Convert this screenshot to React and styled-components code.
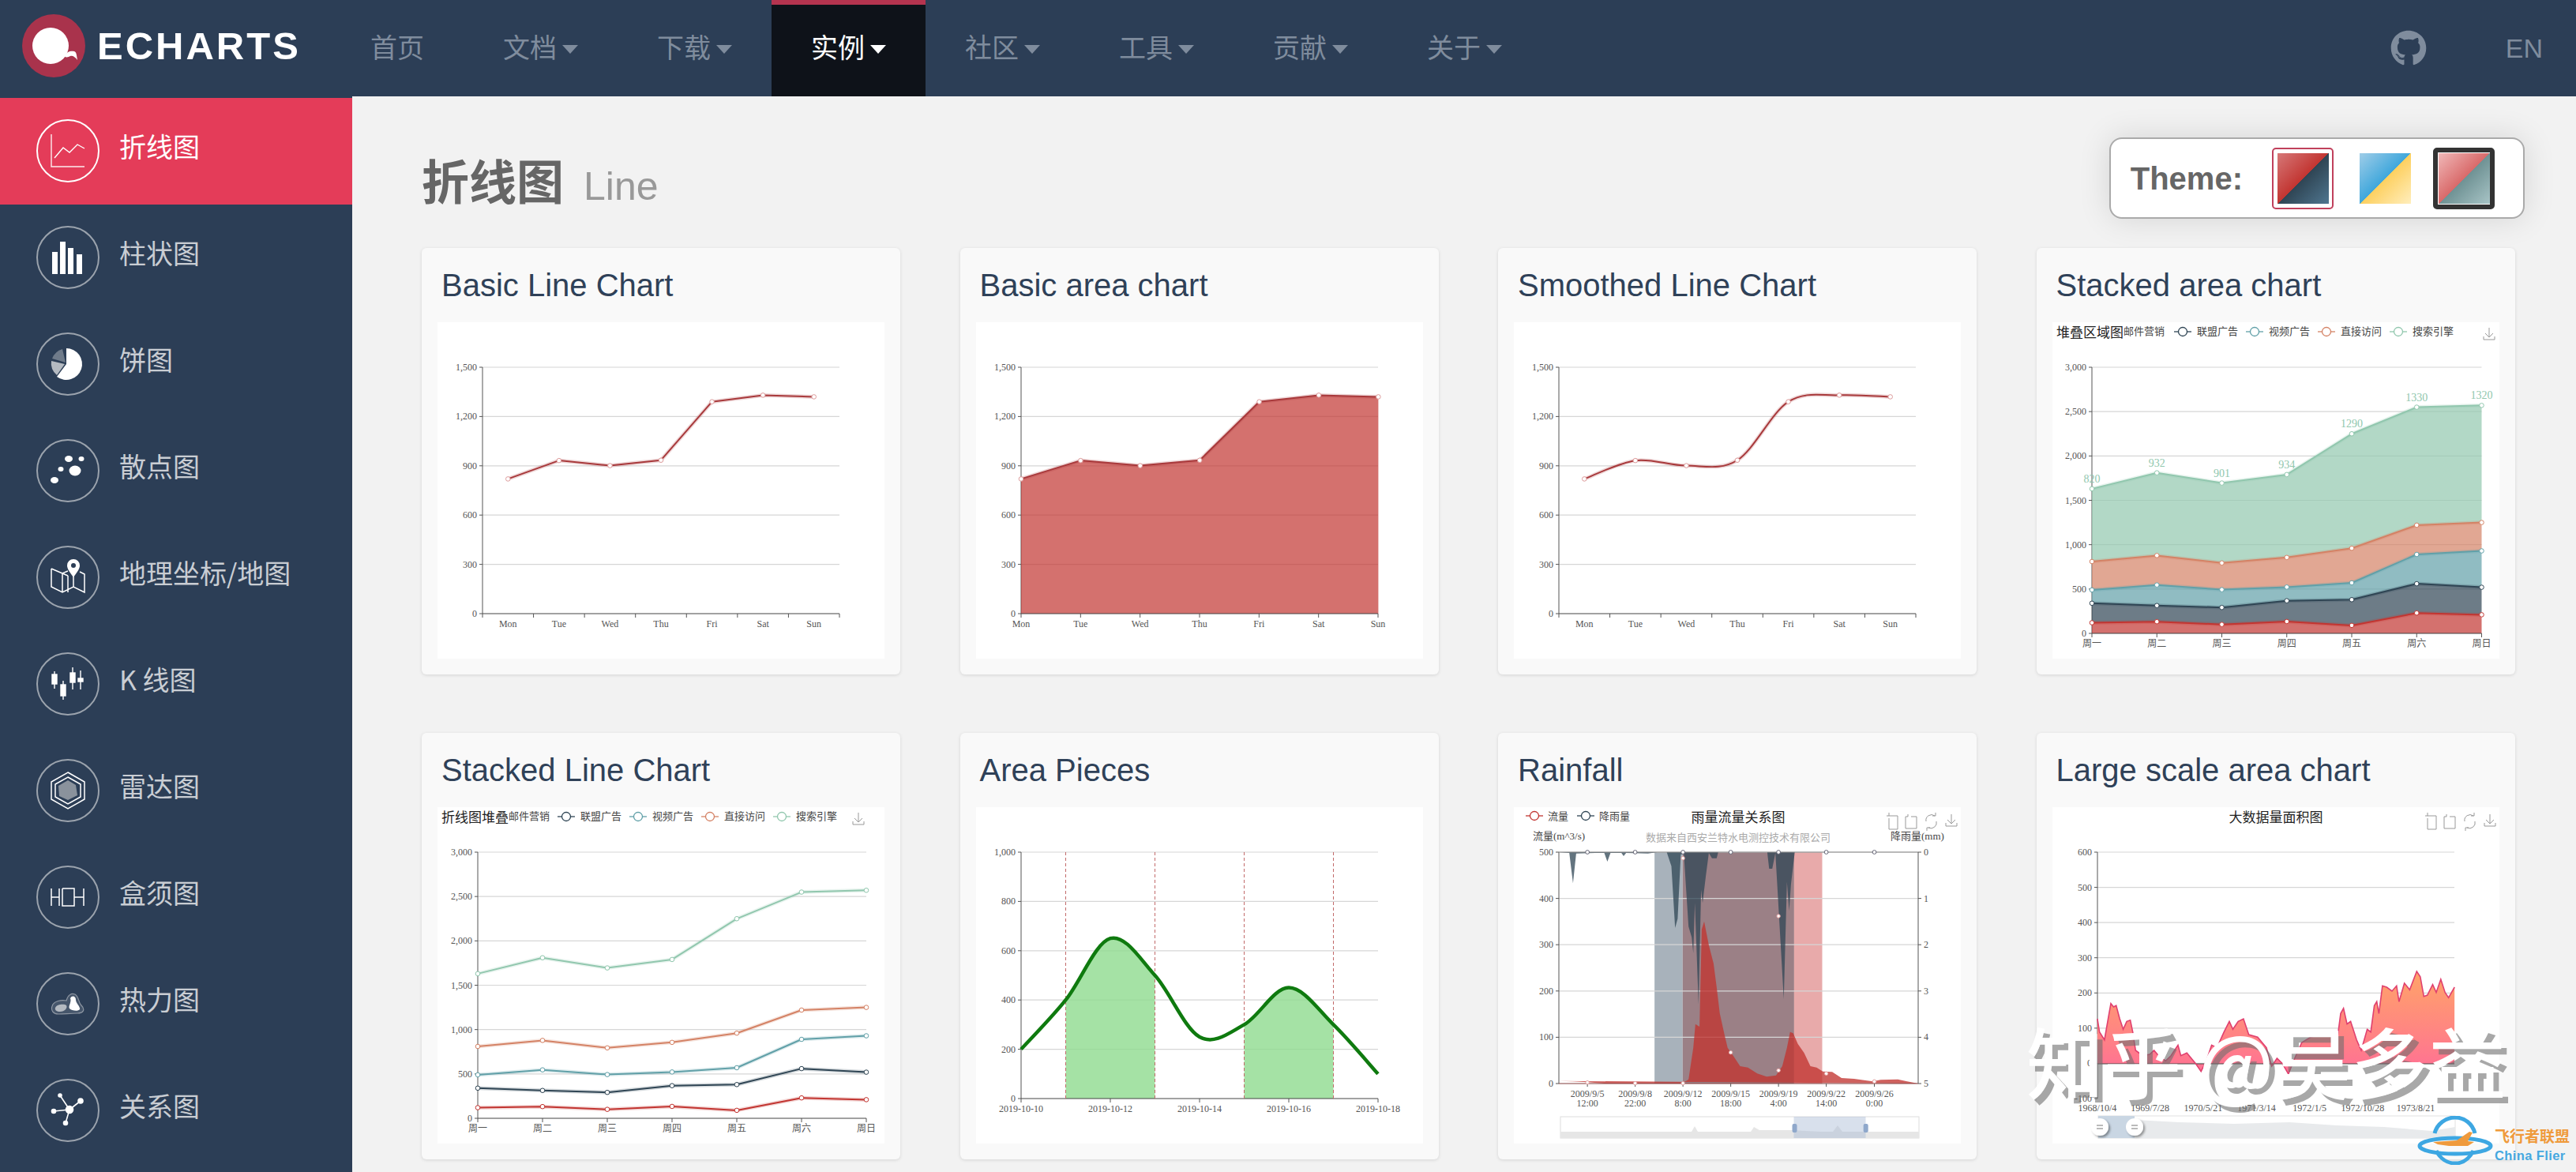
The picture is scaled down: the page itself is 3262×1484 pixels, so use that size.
import styled, { createGlobalStyle } from "styled-components";
import { FaGithub } from "react-icons/fa";

const GlobalStyle = createGlobalStyle`
  html, body {
    margin: 0;
    padding: 0;
    height: 100%;
    overflow: hidden;
    background: #f2f2f2;
    font-family: "Liberation Sans", "Noto Sans CJK SC", sans-serif;
  }
`;

const Page = styled.div`
  position: relative;
  width: 3262px;
  height: 1484px;
  overflow: hidden;
  display: flex;
  flex-direction: column;
`;

const Nav = styled.nav`
  height: 122px;
  flex: none;
  display: flex;
  align-items: stretch;
  background: #2c3e56;
  color: #7f8c9d;
`;

const Logo = styled.div`
  width: 419px;
  flex: none;
  display: flex;
  align-items: center;
  gap: 15px;
  padding: 0 0 6px 28px;
  box-sizing: border-box;
`;

const LogoText = styled.span`
  font: bold 49px "Liberation Sans", sans-serif;
  letter-spacing: 3px;
  color: #fff;
`;

const NavItem = styled.div`
  display: flex;
  align-items: center;
  gap: 7px;
  padding: 0 50px 12px;
  font: 34px "Noto Sans CJK SC", sans-serif;
  border-top: 6px solid ${(p) => (p.$active ? "#b5344f" : "transparent")};
  box-sizing: border-box;
  background: ${(p) => (p.$active ? "#0e1219" : "transparent")};
  color: ${(p) => (p.$active ? "#fff" : "inherit")};
`;

const Caret = styled.i`
  width: 0;
  height: 0;
  margin-top: 8px;
  border-left: 10px solid transparent;
  border-right: 10px solid transparent;
  border-top: 11px solid currentColor;
`;

const NavRight = styled.div`
  margin-left: auto;
  display: flex;
  align-items: center;
  gap: 100px;
  padding-right: 42px;
  font-size: 34px;
`;

const Body = styled.div`
  flex: 1;
  min-height: 0;
  display: flex;
`;

const Sidebar = styled.aside`
  width: 446px;
  flex: none;
  padding-top: 2px;
  background: #2c3e56;
`;

const SideItem = styled.div`
  height: 135px;
  display: flex;
  align-items: center;
  gap: 25px;
  padding: 0 0 1px 46px;
  box-sizing: border-box;
  font: 34px "Noto Sans CJK SC", sans-serif;
  background: ${(p) => (p.$active ? "#e43c59" : "transparent")};
  color: ${(p) => (p.$active ? "#fff" : "#c9cdd3")};
`;

const SideLabel = styled.span`
  padding-bottom: 14px;
`;

const SideIcon = styled.span`
  width: 80px;
  height: 80px;
  flex: none;
  box-sizing: border-box;
  border: 2px solid ${(p) => (p.$active ? "#fff" : "#9ba3ad")};
  border-radius: 50%;
  svg {
    display: block;
    margin: -2px;
  }
`;

const Main = styled.main`
  flex: 1;
  min-width: 0;
  padding: 52px 65px 0 88px;
`;

const Header = styled.header`
  height: 103px;
  margin-bottom: 37px;
  display: flex;
  align-items: center;
  justify-content: space-between;
`;

const Heading = styled.h1`
  margin: 2px 0 0;
  font: bold 60px "Liberation Sans", "Noto Sans CJK SC", sans-serif;
  color: #666;
`;

const HeadingSub = styled.small`
  margin-left: 25px;
  font-size: 50px;
  font-weight: normal;
  color: #999;
`;

const ThemeBox = styled.div`
  display: flex;
  align-items: center;
  height: 103px;
  box-sizing: border-box;
  padding: 0 36px 0 25px;
  background: #fff;
  border: 2px solid #aaa;
  border-radius: 16px;
  box-shadow: 0 0 40px rgba(0, 0, 0, 0.12);
`;

const ThemeLabel = styled.span`
  margin-right: 37px;
  padding-top: 2px;
  font-weight: bold;
  font-size: 40px;
  color: #666;
`;

const SwatchFrame = styled.div`
  width: 78px;
  height: 78px;
  box-sizing: border-box;
  display: flex;
  align-items: center;
  justify-content: center;
  margin-right: ${(p) => p.$gap || 0}px;
  border-radius: 5px;
  border: ${(p) => p.$border};
`;

const Swatch = styled.div`
  width: 65px;
  height: 64px;
  flex: none;
  background: linear-gradient(
    to bottom right,
    ${(p) => p.$a},
    ${(p) => p.$b} 50%,
    ${(p) => p.$c} 50%,
    ${(p) => p.$d}
  );
`;

const Grid = styled.section`
  display: grid;
  grid-template-columns: repeat(4, 606px);
  column-gap: 75.5px;
  row-gap: 74px;
`;

const Card = styled.article`
  height: 540px;
  box-sizing: border-box;
  padding: 0 20px;
  background: #f9f9f9;
  border-radius: 6px;
  box-shadow: 0 1px 4px rgba(0, 0, 0, 0.12);
`;

const CardTitle = styled.h2`
  height: 94px;
  margin: 0;
  padding-left: 5px;
  font-size: 40px;
  font-weight: normal;
  line-height: 94px;
  color: #2f4158;
  white-space: nowrap;
`;

const Chart = styled.svg`
  display: block;
  width: 566px;
  height: 426px;
  background: #fff;
  text {
    font-family: "Liberation Serif", "Noto Sans CJK SC", serif;
    font-size: 12px;
    fill: #555;
  }
  text.title {
    font-size: 17px;
    fill: #222;
  }
  text.legend {
    font-size: 13px;
    fill: #444;
  }
  text.sub {
    font-size: 13px;
    fill: #aaa;
  }
  text.value {
    font-size: 14px;
    fill: #91c7ae;
  }
`;

const Watermark = styled.div`
  position: absolute;
  left: 2566px;
  top: 1270px;
  font: 500 98px "Noto Sans CJK SC", sans-serif;
  color: #fff;
  white-space: nowrap;
  text-shadow: 7px 7px 0 rgba(110, 110, 110, 0.6);
`;

const FlierBadge = styled.div`
  position: absolute;
  left: 3061px;
  top: 1413px;
  display: flex;
  align-items: center;
  gap: 2px;
`;

const FlierText = styled.div`
  display: flex;
  flex-direction: column;
  line-height: 1;
  padding-top: 8px;
`;

const FlierCn = styled.span`
  font: bold 19px "Noto Sans CJK SC", sans-serif;
  color: #ef9a3c;
`;

const FlierEn = styled.span`
  margin-top: 3px;
  font: bold 16.5px "Liberation Sans", sans-serif;
  letter-spacing: 0.4px;
  color: #45a8e0;
`;

const RED = "#c23531";
const SERIES = ["#c23531", "#2f4554", "#61a0a8", "#d48265", "#91c7ae"];
const DAYS = ["Mon", "Tue", "Wed", "Thu", "Fri", "Sat", "Sun"];
const WEEK = ["周一", "周二", "周三", "周四", "周五", "周六", "周日"];
const SALES = [820, 932, 901, 934, 1290, 1330, 1320];
const STACK = [
  [120, 132, 101, 134, 90, 230, 210],
  [220, 182, 191, 234, 290, 330, 310],
  [150, 232, 201, 154, 190, 330, 410],
  [320, 332, 301, 334, 390, 330, 320],
  [820, 932, 901, 934, 1290, 1330, 1320],
];
const LEGEND = ["联盟广告", "视频广告", "直接访问", "搜索引擎"];

const linePath = (pts) => pts.map((p, i) => `${i ? "L" : "M"}${p[0].toFixed(1)} ${p[1].toFixed(1)}`).join(" ");

const smoothPath = (pts) => {
  let d = `M${pts[0][0]} ${pts[0][1]}`;
  for (let i = 0; i < pts.length - 1; i++) {
    const p0 = pts[i - 1] || pts[i];
    const p1 = pts[i];
    const p2 = pts[i + 1];
    const p3 = pts[i + 2] || p2;
    d += ` C${p1[0] + (p2[0] - p0[0]) / 6} ${p1[1] + (p2[1] - p0[1]) / 6} ${p2[0] - (p3[0] - p1[0]) / 6} ${p2[1] - (p3[1] - p1[1]) / 6} ${p2[0]} ${p2[1]}`;
  }
  return d;
};

function YAxis({ x0, x1, top, bottom, labels }) {
  const step = (bottom - top) / (labels.length - 1);
  return (
    <g>
      {labels.map((l, i) => {
        const y = bottom - i * step;
        return (
          <g key={l}>
            {i > 0 && <line x1={x0} x2={x1} y1={y} y2={y} stroke="#d6d6d6" strokeWidth="1.2" />}
            <line x1={x0 - 4} x2={x0} y1={y} y2={y} stroke="#555" />
            <text x={x0 - 7} y={y + 4} textAnchor="end">{l}</text>
          </g>
        );
      })}
      <line x1={x0} x2={x0} y1={top} y2={bottom} stroke="#555" />
    </g>
  );
}

function XAxis({ x0, x1, y, labels, band }) {
  const n = labels.length;
  const step = (x1 - x0) / (band ? n : n - 1);
  return (
    <g>
      <line x1={x0} x2={x1} y1={y} y2={y} stroke="#444" />
      {Array.from({ length: band ? n + 1 : n }, (_, i) => (
        <line key={i} x1={x0 + i * step} x2={x0 + i * step} y1={y} y2={y + 5} stroke="#555" />
      ))}
      {labels.map((l, i) => (
        <text key={l} x={x0 + (band ? i + 0.5 : i) * step} y={y + 17} textAnchor="middle">{l}</text>
      ))}
    </g>
  );
}

function Dots({ pts, color }) {
  return pts.map((p, i) => <circle key={i} cx={p[0]} cy={p[1]} r="2.8" fill="#fff" stroke={color} strokeWidth="1" />);
}

function Stroke({ d, color, width = 2 }) {
  return (
    <g fill="none" strokeLinejoin="round">
      <path d={d} stroke={color} strokeWidth={width + 3} opacity="0.2" />
      <path d={d} stroke={color} strokeWidth={width} />
    </g>
  );
}

function LegendMark({ x, y, color }) {
  return (
    <g fill="none" stroke={color} strokeWidth="1.3">
      <line x1={x} x2={x + 22} y1={y} y2={y} />
      <circle cx={x + 11} cy={y} r="5.5" fill="#fff" />
    </g>
  );
}

function DownloadIcon({ x, y }) {
  return (
    <path
      transform={`translate(${x} ${y})`}
      d="M7 0V11M2 7L7 12L12 7M0 11V15H14V11"
      fill="none"
      stroke="#999"
      strokeWidth="1"
    />
  );
}

function Toolbox() {
  return (
    <g fill="none" stroke="#999" strokeWidth="1">
      <path d="M472 11H486V28H475V14M475 7V11" />
      <path d="M499 9V12H496V27H510V12H503" />
      <path d="M533 11A7 7 0 0 0 522 18M525 26A7 7 0 0 0 535 18M530 11H534V7M527 26H523V30" />
      <DownloadIcon x={547} y={9} />
    </g>
  );
}

function StackHeader({ title, markX, iconX }) {
  return (
    <g>
      <text className="title" x="5" y="19">{title}</text>
      <text className="legend" x="90" y="16">邮件营销</text>
      {LEGEND.map((name, i) => (
        <g key={name}>
          <LegendMark x={markX + i * 91} y={12} color={SERIES[i + 1]} />
          <text className="legend" x={markX + 29 + i * 91} y="16">{name}</text>
        </g>
      ))}
      <DownloadIcon x={iconX} y={7} />
    </g>
  );
}

const bandPts = SALES.map((v, i) => [57 + (i + 0.5) * 64.57, 369 - (v * 312) / 1500]);
const SALES_LABELS = ["0", "300", "600", "900", "1,200", "1,500"];

function BasicLine() {
  return (
    <Chart viewBox="0 0 566 426">
      <YAxis x0={57} x1={509} top={57} bottom={369} labels={SALES_LABELS} />
      <XAxis x0={57} x1={509} y={369} labels={DAYS} band />
      <Stroke d={linePath(bandPts)} color="#a8393b" />
      <Dots pts={bandPts} color="#dd9a9a" />
    </Chart>
  );
}

function BasicArea() {
  const pts = SALES.map((v, i) => [57 + i * 75.4, 369 - (v * 312) / 1500]);
  return (
    <Chart viewBox="0 0 566 426">
      <YAxis x0={57} x1={509} top={57} bottom={369} labels={SALES_LABELS} />
      <path d={`${linePath(pts)} L509.4 369 L57 369Z`} fill={RED} opacity="0.7" />
      <XAxis x0={57} x1={509} y={369} labels={DAYS} />
      <Stroke d={linePath(pts)} color="#a8393b" />
      <Dots pts={pts} color="#dd9a9a" />
    </Chart>
  );
}

function SmoothLine() {
  return (
    <Chart viewBox="0 0 566 426">
      <YAxis x0={57} x1={509} top={57} bottom={369} labels={SALES_LABELS} />
      <XAxis x0={57} x1={509} y={369} labels={DAYS} band />
      <Stroke d={smoothPath(bandPts)} color="#a8393b" />
      <Dots pts={bandPts} color="#dd9a9a" />
    </Chart>
  );
}

const stackedPts = (x0, step) => {
  const totals = [0, 0, 0, 0, 0, 0, 0];
  return STACK.map((s) =>
    s.map((v, i) => {
      totals[i] += v;
      return [x0 + i * step, 394 - (totals[i] * 337) / 3000];
    })
  );
};

const STACK_LABELS = ["0", "500", "1,000", "1,500", "2,000", "2,500", "3,000"];

function StackedArea() {
  const rows = stackedPts(50, 82.25);
  return (
    <Chart viewBox="0 0 566 426">
      <StackHeader title="堆叠区域图" markX={154} iconX={546} />
      <YAxis x0={50} x1={543.5} top={57} bottom={394} labels={STACK_LABELS} />
      {rows.map((pts, n) => {
        const below = n ? rows[n - 1].slice().reverse() : [[543.5, 394], [50, 394]];
        return <path key={n} d={`${linePath(pts.concat(below))}Z`} fill={SERIES[n]} opacity="0.7" />;
      })}
      <XAxis x0={50} x1={543.5} y={394} labels={WEEK} />
      {rows.map((pts, n) => (
        <g key={n}>
          <Stroke d={linePath(pts)} color={SERIES[n]} />
          <Dots pts={pts} color={SERIES[n]} />
        </g>
      ))}
      {rows[4].map((p, i) => (
        <text key={i} className="value" x={p[0]} y={p[1] - 8} textAnchor="middle">{SALES[i]}</text>
      ))}
    </Chart>
  );
}

function StackedLine() {
  const rows = stackedPts(51, 82);
  return (
    <Chart viewBox="0 0 566 426">
      <StackHeader title="折线图堆叠" markX={152} iconX={526} />
      <YAxis x0={51} x1={543} top={57} bottom={394} labels={STACK_LABELS} />
      <XAxis x0={51} x1={543} y={394} labels={WEEK} />
      {rows.map((pts, n) => (
        <g key={n}>
          <Stroke d={linePath(pts)} color={SERIES[n]} />
          <Dots pts={pts} color={SERIES[n]} />
        </g>
      ))}
    </Chart>
  );
}

function AreaPieces() {
  const x = (d) => 57 + d * 56.5;
  const y = (v) => 369 - v * 0.312;
  const pts = [200, 400, 650, 500, 250, 300, 450, 300, 100].map((v, i) => [x(i), y(v)]);
  const d = smoothPath(pts);
  return (
    <Chart viewBox="0 0 566 426">
      <defs>
        <clipPath id="pieces">
          <rect x={x(1)} y="57" width={x(3) - x(1)} height="312" />
          <rect x={x(5)} y="57" width={x(7) - x(5)} height="312" />
        </clipPath>
      </defs>
      <YAxis x0={57} x1={509} top={57} bottom={369} labels={["0", "200", "400", "600", "800", "1,000"]} />
      <path d={`${d} L509 369 L57 369Z`} fill="#8fdb8f" opacity="0.8" clipPath="url(#pieces)" />
      <XAxis x0={57} x1={509} y={369} labels={["2019-10-10", "2019-10-12", "2019-10-14", "2019-10-16", "2019-10-18"]} />
      {[1, 3, 5, 7].map((n) => (
        <line key={n} x1={x(n)} x2={x(n)} y1="57" y2="369" stroke="#c26a6a" strokeDasharray="4 3" />
      ))}
      <path d={d} fill="none" stroke="#0f7a0f" strokeWidth="4.5" />
    </Chart>
  );
}

// traced outlines, x/y as read off the enlarged reference crop
const FLOW = [[185,1076],[230,1078],[276,1081],[330,1086],[430,1086],[580,1086],[600,1070],[615,950],[622,860],[635,870],[642,500],[650,470],[665,560],[680,630],[690,720],[700,820],[715,900],[725,950],[740,975],[765,1020],[790,1025],[820,1048],[850,1060],[880,1055],[900,1020],[915,950],[925,890],[935,895],[950,935],[970,970],[990,1020],[1010,1025],[1030,1040],[1060,1042],[1090,1065],[1130,1068],[1190,1078],[1215,1072],[1270,1070],[1300,1078],[1335,1086]];
const RAIN = [[185,207],[218,210],[230,325],[240,212],[300,210],[330,210],[340,243],[350,210],[385,210],[392,222],[400,210],[470,212],[500,207],[530,207],[545,260],[557,495],[565,460],[575,215],[585,215],[600,490],[610,530],[615,590],[620,400],[632,785],[640,350],[645,400],[655,300],[665,210],[675,230],[690,230],[695,207],[852,207],[858,270],[868,270],[878,210],[885,350],[905,765],[915,320],[922,430],[928,330],[940,207],[1335,207]];
const rainPt = (p) => [p[0] / 2.529 - 16, p[1] / 3 - 12];
const rx = (v) => v / 2.529 - 16;
const RAIN_TICKS = [["2009/9/5", "12:00", 276], ["2009/9/8", "22:00", 429], ["2009/9/12", "8:00", 582], ["2009/9/15", "18:00", 735], ["2009/9/19", "4:00", 888], ["2009/9/22", "14:00", 1041], ["2009/9/26", "0:00", 1195]];

function Rainfall() {
  return (
    <Chart viewBox="0 0 566 426">
      <LegendMark x={15} y={11} color="#c23531" />
      <text className="legend" x="43" y="16">流量</text>
      <LegendMark x={80} y={11} color="#2f4554" />
      <text className="legend" x="108" y="16">降雨量</text>
      <text className="title" x="284" y="19" textAnchor="middle">雨量流量关系图</text>
      <text className="sub" x="284" y="43" textAnchor="middle">数据来自西安兰特水电测控技术有限公司</text>
      <text className="legend" x="24" y="41">流量(m^3/s)</text>
      <text className="legend" x="477" y="41">降雨量(mm)</text>
      <Toolbox />
      <rect x={rx(491)} y="57" width={rx(581) - rx(491)} height="293" fill="#a8b2bb" />
      <rect x={rx(581)} y="57" width={rx(938) - rx(581)} height="293" fill="#9b8086" />
      <rect x={rx(938)} y="57" width={rx(1028) - rx(938)} height="293" fill="#e8aaaa" />
      <YAxis x0={57} x1={512} top={57} bottom={350} labels={["0", "100", "200", "300", "400", "500"]} />
      <path d={`${linePath(FLOW.map(rainPt))}Z`} fill={RED} opacity="0.78" />
      <path d={`${linePath(RAIN.map(rainPt))}Z`} fill="#2f4554" opacity="0.75" />
      <line x1="57" x2="512" y1="57" y2="57" stroke="#888" />
      <line x1="57" x2="512" y1="350" y2="350" stroke="#803c3c" />
      <line x1="512" x2="512" y1="57" y2="350" stroke="#555" />
      {["0", "1", "2", "3", "4", "5"].map((l, i) => (
        <g key={l}>
          <line x1="512" x2="516" y1={57 + i * 58.6} y2={57 + i * 58.6} stroke="#555" />
          <text x="519" y={61 + i * 58.6}>{l}</text>
        </g>
      ))}
      {RAIN_TICKS.map(([a, b, v]) => (
        <g key={a}>
          <line x1={rx(v)} x2={rx(v)} y1="350" y2="354" stroke="#555" />
          <text x={rx(v)} y="367" textAnchor="middle">{a}</text>
          <text x={rx(v)} y="379" textAnchor="middle">{b}</text>
          <circle cx={rx(v)} cy="57" r="2.4" fill="#fff" stroke="#667" />
        </g>
      ))}
      {[[582, 230], [888, 450], [735, 968], [888, 1036], [1041, 1048], [276, 1082], [429, 1085], [582, 1085], [1195, 1078]].map(([a, b]) => (
        <circle key={`${a}-${b}`} cx={rx(a)} cy={b / 3 - 12} r="2.2" fill="#fff" stroke="#e3a0a0" />
      ))}
      <rect x="59" y="392" width="454" height="27" fill="#fff" stroke="#ddd" />
      <path d="M59 411 H225 L229 404 L233 411 H300 L304 405 L311 409 H350 L390 411 H404 L410 403 L416 411 L513 411 V419 H59Z" fill="#e6e6e6" />
      <rect x={rx(937)} y="392" width="91" height="27" fill="#a9bbd4" opacity="0.45" />
      <rect x={rx(932)} y="401" width="6" height="11" rx="2" fill="#8fa8cb" />
      <rect x={rx(1160)} y="401" width="6" height="11" rx="2" fill="#8fa8cb" />
    </Chart>
  );
}

const BIG = [[212,420],[218,470],[232,500],[245,400],[250,362],[258,375],[265,370],[275,420],[285,460],[295,430],[305,425],[312,470],[320,540],[340,560],[360,555],[372,540],[385,560],[405,580],[420,560],[440,520],[448,560],[465,550],[490,590],[505,620],[520,580],[535,520],[550,530],[570,470],[585,430],[595,460],[610,430],[625,420],[640,480],[665,490],[690,530],[705,600],[720,570],[735,590],[752,630],[770,570],[790,510],[815,490],[840,480],[860,470],[875,470],[892,480],[900,400],[908,380],[918,440],[928,430],[945,500],[958,540],[975,460],[985,470],[995,370],[1002,355],[1008,400],[1018,295],[1030,300],[1045,315],[1058,295],[1065,355],[1080,285],[1095,310],[1115,240],[1125,260],[1135,335],[1145,330],[1160,290],[1170,320],[1183,270],[1195,320],[1205,340],[1222,300]];
const BIG_TICKS = [["1968/10/4", 212], ["1969/7/28", 361], ["1970/5/21", 511], ["1971/3/14", 662], ["1972/1/5", 812], ["1972/10/28", 962], ["1973/8/21", 1112]];
const bigPt = (p) => [p[0] / 2.233 - 38, p[1] / 3 + 128];

function LargeArea() {
  const pts = BIG.map(bigPt);
  return (
    <Chart viewBox="0 0 566 426">
      <defs>
        <linearGradient id="bigFill" x1="0" y1="0" x2="0" y2="1">
          <stop offset="0" stopColor="#ffa468" />
          <stop offset="1" stopColor="#ff6f95" />
        </linearGradient>
        <filter id="knobShadow" x="-50%" y="-50%" width="200%" height="200%">
          <feDropShadow dx="2" dy="2" stdDeviation="1.5" floodOpacity="0.4" />
        </filter>
      </defs>
      <text className="title" x="283" y="19" textAnchor="middle">大数据量面积图</text>
      <Toolbox />
      <YAxis x0={57} x1={509} top={57} bottom={369} labels={["-100", "0", "100", "200", "300", "400", "500", "600"]} />
      <path d={`${linePath(pts)} L509 325 L57 325Z`} fill="url(#bigFill)" />
      <line x1="57" x2="509" y1="325" y2="325" stroke="#444" />
      <path d={linePath(pts)} fill="none" stroke="#e0406f" strokeWidth="1.6" />
      {BIG_TICKS.map(([l, v]) => (
        <text key={l} x={v / 2.233 - 38} y="385" textAnchor="middle">{l}</text>
      ))}
      <rect x="58" y="391" width="452" height="28" fill="#fff" stroke="#e2e2e2" />
      <path d="M60 398 L105 396 L160 399 L230 401 L300 399 L360 403 L420 405 L480 410 L510 405 V419 H60Z" fill="#e8eaec" />
      <rect x="58" y="391" width="46" height="28" fill="#c9d6e3" />
      {[60, 104].map((cx) => (
        <g key={cx}>
          <circle cx={cx} cy="405" r="11" fill="#fff" filter="url(#knobShadow)" />
          <path d={`M${cx - 4} 403H${cx + 4}M${cx - 4} 407H${cx + 4}`} stroke="#777" />
        </g>
      ))}
    </Chart>
  );
}

const CHARTS = [
  ["Basic Line Chart", BasicLine],
  ["Basic area chart", BasicArea],
  ["Smoothed Line Chart", SmoothLine],
  ["Stacked area chart", StackedArea],
  ["Stacked Line Chart", StackedLine],
  ["Area Pieces", AreaPieces],
  ["Rainfall", Rainfall],
  ["Large scale area chart", LargeArea],
];

const iconProps = { width: 80, height: 80, viewBox: "0 0 80 80" };

const SIDE_ITEMS = [
  ["折线图", (
    <svg {...iconProps} fill="none" stroke="#fff" strokeWidth="1.4">
      <path d="M19 19V60H61" opacity="0.9" />
      <path d="M23 49L34 36L42 42L52 32L61 37" />
    </svg>
  )],
  ["柱状图", (
    <svg {...iconProps} fill="#fff">
      <rect x="20" y="33" width="7" height="28" />
      <rect x="30" y="20" width="7" height="41" />
      <rect x="40" y="28" width="7" height="33" />
      <rect x="51" y="36" width="7" height="25" />
    </svg>
  )],
  ["饼图", (
    <svg {...iconProps}>
      <path d="M38 20A20 20 0 1 1 26 56L38 40Z" fill="#fff" />
      <path d="M26 54A20 20 0 0 1 19 36L36 40Z" fill="#b4bac1" />
      <path d="M20 33A20 20 0 0 1 33 21L37 38Z" fill="#6f7b8a" />
    </svg>
  )],
  ["散点图", (
    <svg {...iconProps} fill="#fff">
      <ellipse cx="41" cy="25" rx="5" ry="4" />
      <ellipse cx="57" cy="25" rx="3.5" ry="3" />
      <ellipse cx="49" cy="40" rx="7.5" ry="6.5" />
      <ellipse cx="31" cy="38" rx="3.5" ry="3" />
      <ellipse cx="23" cy="52" rx="5" ry="4" />
    </svg>
  )],
  ["地理坐标/地图", (
    <svg {...iconProps} fill="none" stroke="#fff" strokeWidth="1.5">
      <path d="M40 38V59M19 29L40 38M19 29V52L33 59L47 52L61 59V36L55 33M33 35V59M19 29L33 35L40 32M47 39V52" />
      <path d="M47 40C42 33 39 29 39 25A8 8 0 0 1 55 25C55 29 52 33 47 40Z" fill="#fff" stroke="none" />
      <circle cx="47" cy="25" r="3" fill="#2c3e56" stroke="none" />
    </svg>
  )],
  ["K 线图", (
    <svg {...iconProps} fill="#fff" stroke="#fff" strokeWidth="1.4">
      <path d="M23 24V46M34 36V60M46 19V47M56 23V47" fill="none" />
      <rect x="20" y="28" width="6" height="12" />
      <rect x="31" y="41" width="6" height="14" />
      <rect x="43" y="26" width="6" height="12" />
      <rect x="53" y="33" width="6" height="4" />
    </svg>
  )],
  ["雷达图", (
    <svg {...iconProps} fill="none" stroke="#fff" strokeWidth="1.5">
      <path d="M40 17L61 29V51L40 63L19 51V29Z" />
      <path d="M40 23L56 32V48L40 57L24 48V32Z" />
      <path d="M40 27L50 33L52 46L40 52L29 47L28 34Z" fill="#8a929c" stroke="none" />
    </svg>
  )],
  ["盒须图", (
    <svg {...iconProps} fill="none" stroke="#fff" strokeWidth="1.5">
      <path d="M19 29V51M19 40H29M29 29V51M33 29V51H48V29H33M48 40H60M60 29V51" />
    </svg>
  )],
  ["热力图", (
    <svg {...iconProps}>
      <path d="M20 43C22 36 32 35 38 36C40 29 44 26 49 28C54 31 53 38 57 42C62 47 60 52 52 52C42 52 36 53 28 53C22 53 18 49 20 43Z" fill="#46566b" stroke="#8d96a2" strokeWidth="1.2" />
      <path d="M24 45C26 40 36 40 38 42C40 45 36 50 30 50C26 50 23 48 24 45Z" fill="#b4bac1" />
      <path d="M43 33C45 29 50 30 50 35C50 39 56 44 55 47C53 50 45 49 42 46C40 43 45 38 43 33Z" fill="#fff" />
    </svg>
  )],
  ["关系图", (
    <svg {...iconProps} fill="#fff" stroke="#fff" strokeWidth="1.6">
      <path d="M42 39L30 21M42 39L22 41M42 39L56 28M42 39L37 56" fill="none" />
      <circle cx="42" cy="39" r="4.5" />
      <circle cx="30" cy="21" r="2" />
      <circle cx="22" cy="41" r="2.5" />
      <circle cx="56" cy="28" r="3" />
      <circle cx="37" cy="56" r="2.5" />
    </svg>
  )],
];

function EchartsMark() {
  return (
    <svg width="80" height="80" viewBox="0 0 80 80">
      <circle cx="40" cy="40" r="40" fill="#a9334c" />
      <circle cx="36" cy="40" r="23" fill="#fff" />
      <path d="M54 54C56 47 62 46 66 47C69 48 69 52 70 58C67 54 64 52 61 53C59 54 57 55 54 54Z" fill="#fff" />
    </svg>
  );
}

function FlierMark() {
  return (
    <svg width="96" height="62" viewBox="0 0 96 62" fill="none">
      <path d="M22 22C25 10 36 2 48 2C60 2 70 10 73 22" stroke="#3da7e2" strokeWidth="5" />
      <path d="M24 44C29 54 38 60 48 60C58 60 66 54 71 44" stroke="#3da7e2" strokeWidth="5" />
      <ellipse cx="48" cy="38" rx="45" ry="10" stroke="#3da7e2" strokeWidth="5" />
      <path d="M20 33L50 31L66 20L70 21L64 32L72 33L64 38L40 38L26 36Z" fill="#ef9a3c" />
    </svg>
  );
}

export default function App() {
  return (
    <Page>
      <GlobalStyle />
      <Nav>
        <Logo>
          <EchartsMark />
          <LogoText>ECHARTS</LogoText>
        </Logo>
        <NavItem>首页</NavItem>
        <NavItem>文档<Caret /></NavItem>
        <NavItem>下载<Caret /></NavItem>
        <NavItem $active>实例<Caret /></NavItem>
        <NavItem>社区<Caret /></NavItem>
        <NavItem>工具<Caret /></NavItem>
        <NavItem>贡献<Caret /></NavItem>
        <NavItem>关于<Caret /></NavItem>
        <NavRight>
          <FaGithub size={46} />
          <span>EN</span>
        </NavRight>
      </Nav>
      <Body>
        <Sidebar>
          {SIDE_ITEMS.map(([label, icon], i) => (
            <SideItem key={label} $active={i === 0}>
              <SideIcon $active={i === 0}>{icon}</SideIcon>
              <SideLabel>{label}</SideLabel>
            </SideItem>
          ))}
        </Sidebar>
        <Main>
          <Header>
            <Heading>
              折线图
              <HeadingSub>Line</HeadingSub>
            </Heading>
            <ThemeBox>
              <ThemeLabel>Theme:</ThemeLabel>
              <SwatchFrame $border="2px solid #c0405c" $gap={26}>
                <Swatch $a="#d67878" $b="#c23531" $c="#2f4554" $d="#4f7690" />
              </SwatchFrame>
              <SwatchFrame $border="2px solid transparent" $gap={22}>
                <Swatch $a="#9fcde8" $b="#3fa7dc" $c="#fdd060" $d="#ffeebd" />
              </SwatchFrame>
              <SwatchFrame $border="6px solid #333">
                <Swatch $a="#f0b8b8" $b="#d96a6a" $c="#6f9294" $d="#a8c4c6" />
              </SwatchFrame>
            </ThemeBox>
          </Header>
          <Grid>
            {CHARTS.map(([title, ChartBody]) => (
              <Card key={title}>
                <CardTitle>{title}</CardTitle>
                <ChartBody />
              </Card>
            ))}
          </Grid>
        </Main>
      </Body>
      <Watermark>知乎 @吴多益</Watermark>
      <FlierBadge>
        <FlierMark />
        <FlierText>
          <FlierCn>飞行者联盟</FlierCn>
          <FlierEn>China Flier</FlierEn>
        </FlierText>
      </FlierBadge>
    </Page>
  );
}
